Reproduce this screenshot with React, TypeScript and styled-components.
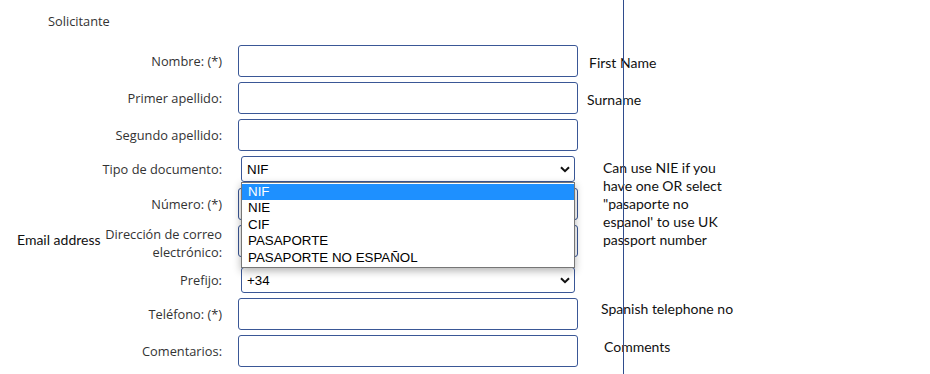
import React from 'react';
import styled, { createGlobalStyle } from 'styled-components';

const GlobalStyle = createGlobalStyle`
  body {
    margin: 0;
    background: #ffffff;
  }
`;

const Page = styled.div`
  position: relative;
  width: 930px;
  height: 374px;
  overflow: hidden;
  font-family: 'Open Sans', 'Noto Sans', sans-serif;
  font-size: 12.8px;
  color: #333333;
`;

const Divider = styled.div`
  position: absolute;
  top: 0;
  left: 623px;
  width: 1px;
  height: 100%;
  background: #2f4b8c;
  box-shadow: 3px 0 6px rgba(0, 0, 0, 0.06);
`;

const Title = styled.div`
  height: 45px;
  box-sizing: border-box;
  padding: 12px 0 0 48px;
  line-height: 18px;
`;

const Form = styled.div`
  display: flex;
  flex-direction: column;
`;

const Row = styled.div<{ $h: number }>`
  display: grid;
  grid-template-columns: 238px 340px 1fr;
  align-items: start;
  height: ${(p) => p.$h}px;
`;

const LabelCell = styled.div<{ $h: number }>`
  display: flex;
  align-items: center;
  justify-content: flex-end;
  padding-right: 16px;
  min-height: ${(p) => p.$h}px;
  line-height: 18px;
`;

const LabelText = styled.span<{ $w?: number }>`
  text-align: right;
  ${(p) => (p.$w ? `width: ${p.$w}px;` : '')}
`;

const Aside = styled.span`
  align-self: flex-start;
  margin: 6px auto 0 0;
  padding-left: 17px;
  font-family: Lato, 'Liberation Sans', sans-serif;
  font-size: 14px;
  line-height: 18px;
  color: #111111;
  white-space: nowrap;
`;

const Input = styled.div`
  box-sizing: border-box;
  width: 340px;
  height: 32px;
  border: 1px solid #3a5796;
  border-radius: 3px;
  background: #ffffff;
`;

const SelectWrap = styled.div`
  position: relative;
  margin: 0 3px;
`;

const Select = styled.div`
  box-sizing: border-box;
  display: flex;
  align-items: center;
  justify-content: space-between;
  width: 334px;
  height: 26px;
  padding: 0 4px 0 5px;
  border: 1px solid #3a5796;
  border-radius: 3px;
  background: #ffffff;
  font-family: 'Liberation Sans', Arial, sans-serif;
  font-size: 13.33px;
  color: #000000;
`;

const Menu = styled.ul`
  position: absolute;
  top: 26px;
  left: 0;
  z-index: 2;
  box-sizing: border-box;
  width: 334px;
  margin: 0;
  padding: 1px 0;
  list-style: none;
  background: #ffffff;
  border: 1px solid #767676;
  box-shadow: 0 3px 8px rgba(0, 0, 0, 0.3);
  font-family: 'Liberation Sans', Arial, sans-serif;
  font-size: 13.33px;
  color: #000000;
`;

const Option = styled.li<{ $active?: boolean }>`
  height: 16.4px;
  line-height: 16px;
  padding-left: 6px;
  background: ${(p) => (p.$active ? '#1e90ff' : 'transparent')};
  color: ${(p) => (p.$active ? '#ffffff' : '#000000')};
`;

const Note = styled.div<{ $x: number; $y: number }>`
  padding: ${(p) => p.$y}px 0 0 ${(p) => p.$x}px;
  font-family: Lato, 'Liberation Sans', sans-serif;
  font-size: 14px;
  line-height: 18px;
  color: #111111;
  white-space: nowrap;
`;

const Chevron = () => (
  <svg width="10" height="7" viewBox="0 0 10 7">
    <path d="M1 1.2 L5 5.2 L9 1.2" fill="none" stroke="#111" strokeWidth="2" />
  </svg>
);

const App: React.FC = () => {
  return (
    <Page>
      <GlobalStyle />
      <Title>Solicitante</Title>
      <Form>
        <Row $h={37}>
          <LabelCell $h={32}>Nombre: (*)</LabelCell>
          <Input />
          <Note $x={11} $y={9}>First Name</Note>
        </Row>
        <Row $h={37}>
          <LabelCell $h={32}>Primer apellido:</LabelCell>
          <Input />
          <Note $x={9} $y={9}>Surname</Note>
        </Row>
        <Row $h={37}>
          <LabelCell $h={32}>Segundo apellido:</LabelCell>
          <Input />
          <div />
        </Row>
        <Row $h={32}>
          <LabelCell $h={26}>Tipo de documento:</LabelCell>
          <SelectWrap>
            <Select>
              NIF
              <Chevron />
            </Select>
            <Menu>
              <Option $active>NIF</Option>
              <Option>NIE</Option>
              <Option>CIF</Option>
              <Option>PASAPORTE</Option>
              <Option>PASAPORTE NO ESPAÑOL</Option>
            </Menu>
          </SelectWrap>
          <Note $x={25} $y={3}>
            Can use NIE if you
            <br />
            have one OR select
            <br />
            "pasaporte no
            <br />
            espanol' to use UK
            <br />
            passport number
          </Note>
        </Row>
        <Row $h={37}>
          <LabelCell $h={32}>Número: (*)</LabelCell>
          <Input />
          <div />
        </Row>
        <Row $h={42}>
          <LabelCell $h={36}>
            <Aside>Email address</Aside>
            <LabelText $w={124}>Dirección de correo electrónico:</LabelText>
          </LabelCell>
          <Input />
          <div />
        </Row>
        <Row $h={31}>
          <LabelCell $h={26}>Prefijo:</LabelCell>
          <SelectWrap>
            <Select>
              +34
              <Chevron />
            </Select>
          </SelectWrap>
          <div />
        </Row>
        <Row $h={37}>
          <LabelCell $h={32}>Teléfono: (*)</LabelCell>
          <Input />
          <Note $x={23} $y={2}>Spanish telephone no</Note>
        </Row>
        <Row $h={37}>
          <LabelCell $h={32}>Comentarios:</LabelCell>
          <Input />
          <Note $x={26} $y={3}>Comments</Note>
        </Row>
      </Form>
      <Divider />
    </Page>
  );
};

export default App;
